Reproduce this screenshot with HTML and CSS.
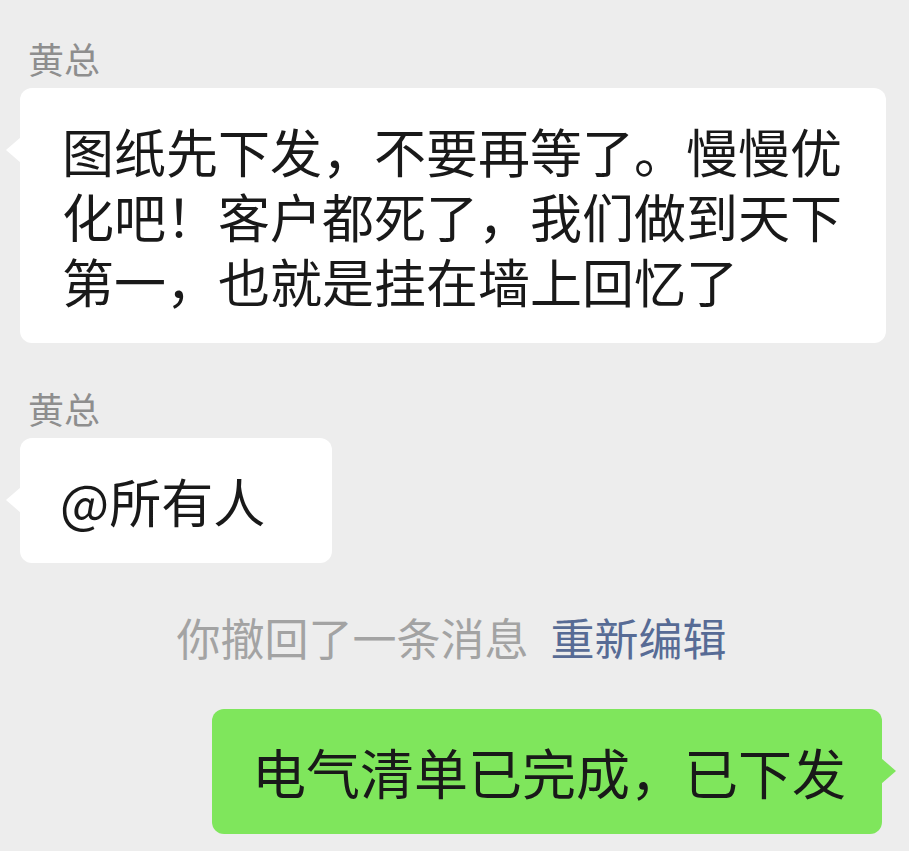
FILE: index.html
```html
<!DOCTYPE html>
<html lang="zh-CN">
<head>
<meta charset="utf-8">
<title>聊天</title>
<link rel="stylesheet" href="styles.css">
</head>
<body>
<div class="chat">
  <div class="msg msg-left first">
    <div class="name">黄总</div>
    <div class="bubble bubble-white wide">图纸先下发，不要再等了。慢慢优化吧！客户都死了，我们做到天下第一，也就是挂在墙上回忆了</div>
  </div>
  <div class="msg msg-left">
    <div class="name">黄总</div>
    <div class="bubble bubble-white mention">@所有人</div>
  </div>
  <div class="system">你撤回了一条消息<span class="link">重新编辑</span></div>
  <div class="msg msg-right">
    <div class="bubble bubble-green">电气清单已完成，已下发</div>
  </div>
</div>
</body>
</html>
```

FILE: styles.css
```css
html, body {
  margin: 0;
  padding: 0;
  background: #ededed;
}
body {
  font-family: "Noto Sans CJK SC", "Noto Sans", sans-serif;
  color: #191919;
  width: 909px;
  height: 851px;
  overflow: hidden;
}
.chat {
  display: flex;
  flex-direction: column;
  padding: 40px 0 0 0;
}
.msg {
  display: flex;
  flex-direction: column;
}
.msg-left {
  align-items: flex-start;
}
.msg + .msg {
  margin-top: 47px;
}
.msg-right {
  align-items: flex-end;
  margin-top: 50px;
  padding-right: 27px;
}
.name {
  font-size: 36px;
  line-height: 36px;
  color: #8e8e8e;
  margin-left: 28px;
  margin-bottom: 12px;
}
.bubble {
  position: relative;
  font-size: 52px;
  line-height: 65px;
  padding: 30px 42px 30px 42px;
  border-radius: 12px;
}
.bubble-white {
  background: #ffffff;
  margin-left: 20px;
}
.wide {
  max-width: 782px;
}
.mention {
  padding-left: 40px;
  padding-right: 67px;
}
.bubble-white::before {
  content: "";
  position: absolute;
  left: -14px;
  top: 49px;
  border-style: solid;
  border-width: 13px 15px 13px 0;
  border-color: transparent #ffffff transparent transparent;
}
.bubble-green {
  background: #7fe65c;
  font-size: 54px;
  padding: 30px 36px 30px 40px;
}
.bubble-green::after {
  content: "";
  position: absolute;
  right: -14px;
  top: 49px;
  border-style: solid;
  border-width: 13px 0 13px 15px;
  border-color: transparent transparent transparent #7fe65c;
}
.system {
  margin-top: 52px;
  padding-right: 6px;
  text-align: center;
  font-size: 44px;
  line-height: 44px;
  color: #a3a3a3;
}
.link {
  color: #576b95;
  margin-left: 22px;
}
```
